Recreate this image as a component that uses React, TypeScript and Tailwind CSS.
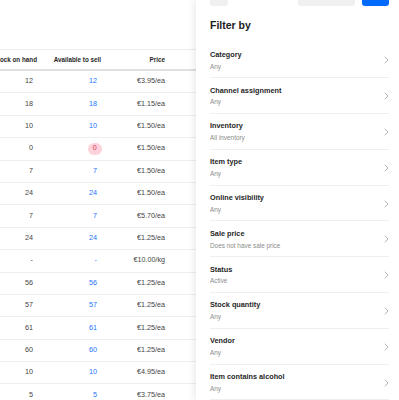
import React from "react";

const rows: { stock: string; avail: string; price: string; zero?: boolean }[] = [
  { stock: "12", avail: "12", price: "€3.95/ea" },
  { stock: "18", avail: "18", price: "€1.15/ea" },
  { stock: "10", avail: "10", price: "€1.50/ea" },
  { stock: "0", avail: "0", price: "€1.50/ea", zero: true },
  { stock: "7", avail: "7", price: "€1.50/ea" },
  { stock: "24", avail: "24", price: "€1.50/ea" },
  { stock: "7", avail: "7", price: "€5.70/ea" },
  { stock: "24", avail: "24", price: "€1.25/ea" },
  { stock: "-", avail: "-", price: "€10.00/kg" },
  { stock: "56", avail: "56", price: "€1.25/ea" },
  { stock: "57", avail: "57", price: "€1.25/ea" },
  { stock: "61", avail: "61", price: "€1.25/ea" },
  { stock: "60", avail: "60", price: "€1.25/ea" },
  { stock: "10", avail: "10", price: "€4.95/ea" },
  { stock: "5", avail: "5", price: "€3.75/ea" },
];

const filters: [string, string][] = [
  ["Category", "Any"],
  ["Channel assignment", "Any"],
  ["Inventory", "All inventory"],
  ["Item type", "Any"],
  ["Online visibility", "Any"],
  ["Sale price", "Does not have sale price"],
  ["Status", "Active"],
  ["Stock quantity", "Any"],
  ["Vendor", "Any"],
  ["Item contains alcohol", "Any"],
];

function Chevron() {
  return (
    <svg width="5" height="8" viewBox="0 0 5 8" className="mt-[-6.3px] shrink-0 self-center">
      <polyline points="1,1 4,4 1,7" fill="none" stroke="#b5b5b5" strokeWidth="1" strokeLinecap="round" strokeLinejoin="round" />
    </svg>
  );
}

export default function App() {
  return (
    <div className="flex h-[400px] w-[399px] overflow-hidden bg-white font-['Liberation_Sans',Arial,sans-serif]">
      {/* table area */}
      <div className="w-[196px] shrink-0 overflow-hidden pt-[49px]">
        <div className="ml-[-30px] w-[226px]">
          <div className="flex h-[22px] items-center border-t border-b-2 border-t-[#ececec] border-b-[#e0e0e0] text-[6.3px] font-bold text-[#1f1f1f]">
            <div className="w-[67px] whitespace-nowrap text-right">Stock on hand</div>
            <div className="w-[64px] whitespace-nowrap text-right">Available to sell</div>
            <div className="w-[64px] whitespace-nowrap text-right">Price</div>
          </div>
          {rows.map((r, i) => (
            <div key={i} className="flex h-[22.4px] items-center border-b border-[#efefef] text-[7.2px] text-[#444]">
              <div className="w-[63px] text-right">{r.stock}</div>
              <div className="flex w-[64px] justify-end">
                {r.zero ? (
                  <span className="mr-[-5px] flex h-[11.5px] w-[14.5px] items-center justify-center rounded-full bg-[#fdd3db] text-[#e0385a]">0</span>
                ) : (
                  <span className="text-[#1a73ff]">{r.avail}</span>
                )}
              </div>
              <div className="w-[68px] text-right">{r.price}</div>
            </div>
          ))}
        </div>
      </div>

      {/* filter panel */}
      <div className="relative z-10 flex w-[203px] shrink-0 flex-col bg-white pl-[14px] pr-[10px] shadow-[-3px_0_6px_rgba(0,0,0,0.07)]">
        <div className="mt-[-18px] flex h-[23.5px] shrink-0 items-stretch">
          <div className="w-[18px] rounded-[3px] bg-[#f0f0f0]" />
          <div className="flex-1" />
          <div className="w-[57px] rounded-[3px] bg-[#f0f0f0]" />
          <div className="ml-[7px] w-[27px] rounded-[3px] bg-[#006aff]" />
        </div>
        <div className="mt-[13px] text-[10.5px] font-bold leading-[13px] text-[#1a1a1a]">Filter by</div>
        <div className="mt-[11px] flex flex-col">
          {filters.map(([label, sub]) => (
            <div key={label} className="flex h-[35.8px] shrink-0 items-start justify-between border-b border-[#efefef] pt-[7.3px]">
              <div className="flex flex-col">
                <div className="whitespace-nowrap text-[7.3px] font-bold leading-[9px] text-[#262626]">{label}</div>
                <div className="mt-[3.8px] whitespace-nowrap text-[6.4px] leading-[8px] text-[#8c8c8c]">{sub}</div>
              </div>
              <Chevron />
            </div>
          ))}
        </div>
      </div>
    </div>
  );
}
